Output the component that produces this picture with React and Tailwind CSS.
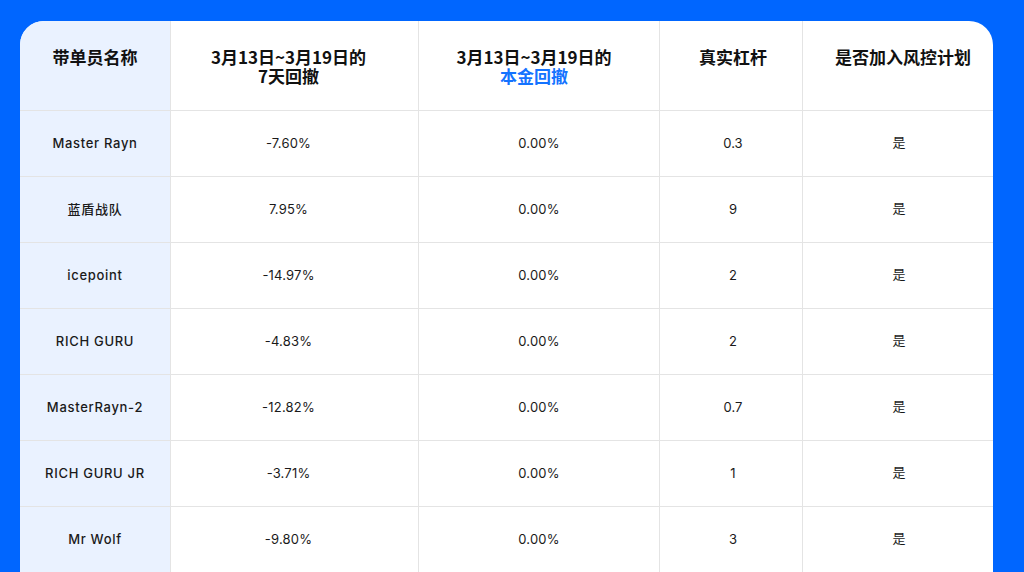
const rows = [
  { name: 'Master Rayn', d7: '-7.60%', principal: '0.00%', lev: '0.3', risk: '是' },
  { name: '蓝盾战队', d7: '7.95%', principal: '0.00%', lev: '9', risk: '是' },
  { name: 'icepoint', d7: '-14.97%', principal: '0.00%', lev: '2', risk: '是' },
  { name: 'RICH GURU', d7: '-4.83%', principal: '0.00%', lev: '2', risk: '是' },
  { name: 'MasterRayn-2', d7: '-12.82%', principal: '0.00%', lev: '0.7', risk: '是' },
  { name: 'RICH GURU JR', d7: '-3.71%', principal: '0.00%', lev: '1', risk: '是' },
  { name: 'Mr Wolf', d7: '-9.80%', principal: '0.00%', lev: '3', risk: '是' },
];

const cols = 'grid grid-cols-[151px_248px_241px_143px_190px]';
const font = { fontFamily: 'Inter, "Noto Sans CJK SC", sans-serif' };
const headFont = { fontFamily: '"Noto Sans CJK SC", sans-serif' };

export default function App() {
  return (
    <div className="w-[1024px] h-[572px] bg-[#0066ff] overflow-hidden pt-[21px] pl-[20px]" style={font}>
      <div className="w-[973px] bg-white rounded-t-[24px] overflow-hidden text-[#111]">
        <div className={`${cols} h-[90px] border-b border-[#e4e4e4] text-[17px] font-bold leading-[19px] text-center`} style={headFont}>
          <div className="bg-[#eaf2ff] pt-[26px] border-r border-[#e4e4e4]">带单员名称</div>
          <div className="pt-[26px] pr-[12px] border-r border-[#e4e4e4]">
            <div>3月13日~3月19日的</div>
            <div>7天回撤</div>
          </div>
          <div className="pt-[26px] pr-[10px] border-r border-[#e4e4e4]">
            <div>3月13日~3月19日的</div>
            <div className="text-[#1473ff]">本金回撤</div>
          </div>
          <div className="pt-[26px] pl-[4px] border-r border-[#e4e4e4]">真实杠杆</div>
          <div className="pt-[26px] pl-[10px]">是否加入风控计划</div>
        </div>
        {rows.map((r) => (
          <div key={r.name} className={`${cols} h-[66px] border-b border-[#e4e4e4] text-[13px] text-center text-[#1a1a1a]`}>
            <div className="bg-[#eaf2ff] border-r border-[#e4e4e4] flex items-center justify-center font-medium tracking-[0.7px]">{r.name}</div>
            <div className="border-r border-[#e4e4e4] pr-[12px] flex items-center justify-center tracking-[0.2px]">{r.d7}</div>
            <div className="border-r border-[#e4e4e4] flex items-center justify-center tracking-[0.2px]">{r.principal}</div>
            <div className="border-r border-[#e4e4e4] pl-[4px] flex items-center justify-center">{r.lev}</div>
            <div className="flex items-center justify-center -mt-[2px] pl-[2px]">{r.risk}</div>
          </div>
        ))}
      </div>
    </div>
  );
}
